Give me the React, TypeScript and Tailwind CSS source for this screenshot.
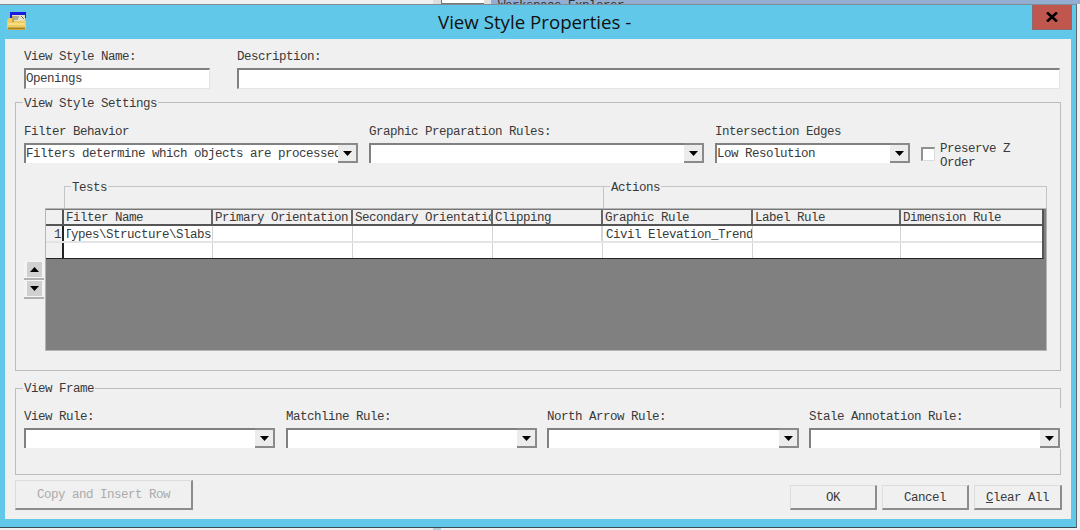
import React from 'react';

function Arrow({ up = false }: { up?: boolean }) {
  return (
    <svg width="9" height="5" viewBox="0 0 9 5" className={up ? 'rotate-180' : ''}>
      <path d="M0 0h9L4.5 5z" fill="#000" />
    </svg>
  );
}

function Combo({ value = '', className = '' }: { value?: string; className?: string }) {
  return (
    <div className={`flex h-[20px] bg-white border-t-2 border-l-2 border-[#808080] ${className}`}>
      <div className="flex-1 min-w-0 leading-[18px] overflow-hidden whitespace-nowrap">{value}</div>
      <div className="w-[20px] shrink-0 -mt-[2px] flex items-center justify-center bg-[#ececec] border-t-2 border-r-2 border-b-2 border-[#8a8a8a]">
        <Arrow />
      </div>
    </div>
  );
}

function Labeled({ label, className = '', children }: { label: string; className?: string; children: React.ReactNode }) {
  return (
    <div className={`flex flex-col gap-[5px] ${className}`}>
      <div className="h-[14px] leading-[16px] whitespace-nowrap">{label}</div>
      {children}
    </div>
  );
}

function Btn({ children, className = '' }: { children: React.ReactNode; className?: string }) {
  return (
    <div className={`flex items-center justify-center bg-[#f0f0f0] border-t border-l border-[#dcdcdc] border-r-2 border-b-2 border-r-[#8c8c8c] border-b-[#8c8c8c] ${className}`}>
      {children}
    </div>
  );
}

const headers = ['Filter Name', 'Primary Orientation', 'Secondary Orientation', 'Clipping', 'Graphic Rule', 'Label Rule', 'Dimension Rule'];
const widths = ['w-[149px]', 'w-[140px]', 'w-[140px]', 'w-[110px]', 'w-[150px]', 'w-[148px]', 'w-[143px]'];

function StyleGrid() {
  return (
    <div className="w-[1002px] h-[143px] bg-[#808080] border-l border-b border-r border-t border-[#b4b4b4]">
      <div className="w-[998px] bg-white border-b border-[#222] border-r-2 border-r-[#555]">
        {/* header row */}
        <div className="flex h-[17px] bg-[#f0f0f0] border-t border-[#777] border-b-2 border-b-[#555]">
          <div className="w-[18px] shrink-0 border-r-2 border-[#555]" />
          {headers.map((h, i) => (
            <div key={h} className={`${widths[i]} shrink-0 pl-[2px] leading-[16px] overflow-hidden whitespace-nowrap border-r-2 border-[#666] last:border-r-0`}>
              {h}
            </div>
          ))}
        </div>
        {/* first row */}
        <div className="flex h-[17px] border-b-2 border-[#e4e4e4]">
          <div className="w-[18px] shrink-0 bg-[#f0f0f0] border-r-2 border-[#222] text-right pr-[1px] leading-[18px]">1</div>
          <div className="w-[149px] shrink-0 flex justify-end pr-[1px] overflow-hidden whitespace-nowrap leading-[18px] border-l-[3px] border-l-white border-r border-[#d4d4d4]">
            <span className="shrink-0">Types\Structure\Slabs</span>
          </div>
          <div className="w-[140px] shrink-0 border-r border-[#d4d4d4]" />
          <div className="w-[140px] shrink-0 border-r border-[#d4d4d4]" />
          <div className="w-[110px] shrink-0 border-r-2 border-[#d4d4d4]" />
          <div className="w-[150px] shrink-0 pl-[3px] pr-[2px] leading-[18px] overflow-hidden whitespace-nowrap border-r border-[#d4d4d4]">Civil Elevation_Trend</div>
          <div className="w-[148px] shrink-0 border-r border-[#d4d4d4]" />
          <div className="w-[143px] shrink-0" />
        </div>
        {/* empty row */}
        <div className="flex h-[15px]">
          <div className="w-[18px] shrink-0 bg-[#f0f0f0] border-r-2 border-[#222]" />
          {widths.map((w, i) => (
            <div key={i} className={`${w} shrink-0 border-r border-[#d4d4d4] last:border-r-0`} />
          ))}
        </div>
      </div>
    </div>
  );
}

function SpinBtn({ up = false }: { up?: boolean }) {
  return (
    <div className="w-[20px] h-[19px] flex items-center justify-center bg-[#f4f4f4] border-b-2 border-[#b0b0b0]">
      <div className="w-[15px] h-[15px] flex items-center justify-center bg-[#d0d0d0]">
        <Arrow up={up} />
      </div>
    </div>
  );
}

export default function App() {
  return (
    <div className="w-[1080px] h-[530px] overflow-hidden flex flex-col bg-[#f0f0f0] text-[12.5px] tracking-[-0.5px] text-[#3a3a3a] font-['Liberation_Mono',monospace]">
      {/* desktop behind the dialog, top */}
      <div className="flex h-[4px] shrink-0 overflow-hidden">
        <div className="w-[433px] bg-[#f0f0f0]" />
        <div className="w-[8px] bg-[#dedede]" />
        <div className="w-[43px] bg-white border-b border-l border-[#777]" />
        <div className="w-[7px] bg-[#e0e0e0]" />
        <div className="flex-1 pl-[7px] bg-[#93aed0] leading-[12px] text-[#333] whitespace-nowrap">Workspace Explorer</div>
      </div>

      {/* dialog window */}
      <div className="w-[1077px] shrink-0 bg-[#62c8ea] border-t border-[#7f8c99] border-b border-b-[#3c4a55] border-r border-r-[#5a6a75]">
        <div className="flex h-[34px]">
          <svg width="19" height="18" viewBox="0 0 19 18" className="ml-[7px] mt-[7px] shrink-0">
            <rect x="3" y="0" width="16" height="6" fill="#1a1ae0" />
            <rect x="5" y="3" width="13" height="7" fill="#e4e0c4" />
            <path d="M7 5h5M7 7h4M14 4l3 3" stroke="#7a7a60" strokeWidth="1" />
            <path d="M2 6h4l1 3h12v7l-1 2H2l-2-2V8z" fill="#f0cc60" />
            <path d="M1 12h17" stroke="#f8e490" strokeWidth="1.5" />
            <path d="M1 16.5h17" stroke="#a88428" strokeWidth="2" />
            <path d="M6 4v6" stroke="#b8962e" strokeWidth="1.5" />
          </svg>
          <div className="ml-[412px] font-['Open_Sans',sans-serif] tracking-normal text-[18.7px] leading-[34px] text-[#111] whitespace-nowrap">View Style Properties -</div>
          <div className="ml-auto mr-[4px] w-[40px] h-[25px] flex items-center justify-center bg-[#c0574f] border border-[#8a6a70] border-t-0">
            <svg width="12" height="10" viewBox="0 0 12 10">
              <path d="M1 0.5l10 9M11 0.5l-10 9" stroke="#000" strokeWidth="2.6" />
            </svg>
          </div>
        </div>

        {/* client area */}
        <div className="ml-[5px] mb-[8px] w-[1066px] h-[480px] bg-[#f0f0f0] pl-[10px] pt-[10px]">
          <div className="flex pl-[9px] gap-[27px]">
            <Labeled label="View Style Name:" className="w-[186px]">
              <div className="h-[21px] leading-[18px] bg-white border-t-2 border-l-2 border-[#808080] border-r border-b border-r-[#e4e4e4] border-b-[#e4e4e4]">Openings</div>
            </Labeled>
            <Labeled label="Description:" className="w-[823px]">
              <div className="h-[21px] bg-white border-t-2 border-l-2 border-[#808080] border-r border-b border-r-[#e4e4e4] border-b-[#e4e4e4]" />
            </Labeled>
          </div>

          {/* View Style Settings */}
          <fieldset className="mt-[6px] w-[1046px] h-[276px] border border-[#bcbcbc] pl-[8px]">
            <legend className="h-[14px] leading-[19px] px-[1px] -ml-[1px]">View Style Settings</legend>
            <div className="flex mt-[15px]">
              <Labeled label="Filter Behavior" className="w-[334px] mr-[11px]">
                <Combo value="Filters determine which objects are processed" />
              </Labeled>
              <Labeled label="Graphic Preparation Rules:" className="w-[335px] mr-[11px]">
                <Combo />
              </Labeled>
              <Labeled label="Intersection Edges" className="w-[195px] mr-[11px]">
                <Combo value="Low Resolution" />
              </Labeled>
              <div className="flex pt-[18px] gap-[5px]">
                <div className="mt-[5px] w-[14px] h-[14px] bg-white border-t-2 border-l-2 border-[#909090] border-r border-b border-r-[#dcdcdc] border-b-[#dcdcdc]" />
                <div className="w-[80px] leading-[14px]">Preserve Z Order</div>
              </div>
            </div>

            {/* Tests / Actions group frames */}
            <div className="flex mt-[9px] ml-[40px]">
              <fieldset className="w-[539px] h-[29px] border border-[#c4c4c4] border-r-0 border-b-0 pl-[6px]">
                <legend className="h-[14px] leading-[18px] px-[1px]">Tests</legend>
              </fieldset>
              <fieldset className="w-[444px] h-[29px] border border-[#c4c4c4] border-b-0 pl-[6px]">
                <legend className="h-[14px] leading-[18px] px-[1px]">Actions</legend>
              </fieldset>
            </div>

            <div className="flex">
              <div className="w-[21px] shrink-0 pt-[53px]">
                <SpinBtn up />
                <SpinBtn />
              </div>
              <StyleGrid />
            </div>
          </fieldset>

          {/* View Frame */}
          <fieldset className="mt-[10px] w-[1046px] h-[94px] border border-[#bcbcbc] pl-[8px]">
            <legend className="h-[14px] leading-[17px] px-[1px] -ml-[1px]">View Frame</legend>
            <div className="flex mt-[13px] pt-[1px] pb-[1px] -mr-[1px] w-[1037px] gap-[10px] bg-[#f0f0f0]">
              <Labeled label="View Rule:" className="w-[251px] mr-[1px]">
                <Combo />
              </Labeled>
              <Labeled label="Matchline Rule:" className="w-[251px]">
                <Combo />
              </Labeled>
              <Labeled label="North Arrow Rule:" className="w-[252px]">
                <Combo />
              </Labeled>
              <Labeled label="Stale Annotation Rule:" className="w-[251px]">
                <Combo />
              </Labeled>
            </div>
          </fieldset>

          {/* bottom buttons */}
          <div className="flex items-end mt-[5px] w-[1047px]">
            <Btn className="w-[178px] h-[30px] pt-[2px] text-[#ababab]">Copy and Insert Row</Btn>
            <div className="ml-auto flex gap-[5px]">
              <Btn className="w-[87px] h-[25px] pt-[2px]">OK</Btn>
              <Btn className="w-[87px] h-[25px] pt-[2px]">Cancel</Btn>
              <Btn className="w-[88px] h-[25px] pt-[2px]">
                <span><u>C</u>lear All</span>
              </Btn>
            </div>
          </div>
        </div>
      </div>

      {/* desktop behind the dialog, bottom */}
      <div className="flex flex-1">
        <div className="w-[433px] bg-[#f0f0f0]" />
        <div className="w-[8px] bg-[#b8cfd8]" />
      </div>
    </div>
  );
}
